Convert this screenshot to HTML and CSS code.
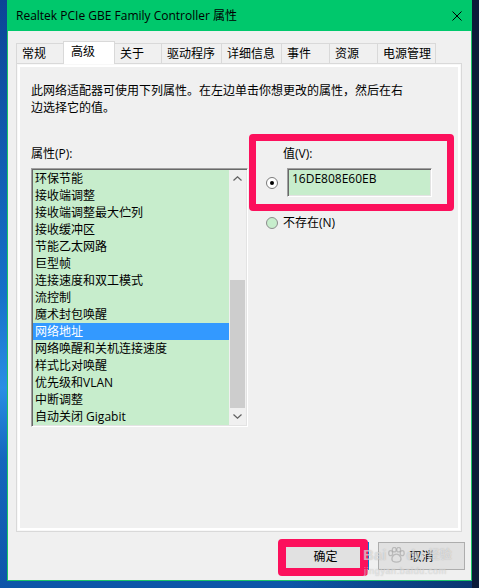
FILE: index.html
```html
<!DOCTYPE html>
<html lang="zh-CN">
<head>
<meta charset="utf-8">
<title>Realtek PCIe GBE Family Controller 属性</title>
<link rel="stylesheet" href="styles.css">
</head>
<body>
<div class="desktop">
  <div class="window">
    <div class="titlebar">
      <span class="title">Realtek PCIe GBE Family Controller 属性</span>
      <svg class="close" width="10" height="10" viewBox="0 0 10 10"><path d="M0.5 0.5 L9.5 9.5 M9.5 0.5 L0.5 9.5" stroke="#000" stroke-width="1" fill="none"/></svg>
    </div>
    <div class="body">
      <div class="tabs">
        <div class="tab w48">常规</div>
        <div class="tab active w52">高级</div>
        <div class="tab w48">关于</div>
        <div class="tab w61">驱动程序</div>
        <div class="tab w61">详细信息</div>
        <div class="tab w49">事件</div>
        <div class="tab w49">资源</div>
        <div class="tab w59">电源管理</div>
      </div>
      <div class="panel">
        <p class="desc">此网络适配器可使用下列属性。在左边单击你想更改的属性，然后在右<br>边选择它的值。</p>
        <div class="props">
          <div class="left">
            <div class="label">属性(P):</div>
            <div class="listbox">
              <ul class="items">
                <li>环保节能</li>
                <li>接收端调整</li>
                <li>接收端调整最大伫列</li>
                <li>接收缓冲区</li>
                <li>节能乙太网路</li>
                <li>巨型帧</li>
                <li>连接速度和双工模式</li>
                <li>流控制</li>
                <li>魔术封包唤醒</li>
                <li class="sel">网络地址</li>
                <li>网络唤醒和关机连接速度</li>
                <li>样式比对唤醒</li>
                <li>优先级和VLAN</li>
                <li>中断调整</li>
                <li>自动关闭 Gigabit</li>
              </ul>
              <div class="scrollbar">
                <div class="sb-btn"><svg width="9" height="5" viewBox="0 0 9 5"><path d="M0.5 4.5 L4.5 0.8 L8.5 4.5" stroke="#606060" stroke-width="1.2" fill="none"/></svg></div>
                <div class="sb-space"></div>
                <div class="sb-thumb"></div>
                <div class="sb-btn"><svg width="9" height="5" viewBox="0 0 9 5"><path d="M0.5 0.5 L4.5 4.2 L8.5 0.5" stroke="#606060" stroke-width="1.2" fill="none"/></svg></div>
              </div>
            </div>
          </div>
          <div class="right">
            <div class="label vlabel">值(V):</div>
            <div class="row">
              <span class="radio checked"></span>
              <div class="input">16DE808E60EB</div>
            </div>
            <div class="row row2">
              <span class="radio"></span>
              <span class="rlabel">不存在(N)</span>
            </div>
          </div>
        </div>
      </div>
      <div class="buttons">
        <button class="btn default">确定</button>
        <button class="btn">取消</button>
      </div>
    </div>
    <div class="mark mark1"></div>
    <div class="mark mark2"></div>
    <div class="watermark">
      <div class="wm-top">Bai<svg class="paw" width="18" height="16" viewBox="0 0 20 18"><g fill="none" stroke="rgba(160,160,160,0.6)" stroke-width="1.4"><ellipse cx="4" cy="7" rx="2.2" ry="2.8"/><ellipse cx="8" cy="3" rx="2.2" ry="2.6"/><ellipse cx="13" cy="3" rx="2.2" ry="2.6"/><ellipse cx="17" cy="7" rx="2.2" ry="2.8"/><path d="M10.5 8 C6 8 4 14 6.5 16 C8.5 17.2 12.5 17.2 14.5 16 C17 14 15 8 10.5 8 Z"/></g></svg>du<span class="wm-cn">经验</span></div>
      <div class="wm-url">jingyan.baidu.com</div>
    </div>
  </div>
</div>
</body>
</html>
```
FILE: styles.css
```css
* { box-sizing: border-box; }
html, body { margin: 0; padding: 0; }
body {
  width: 479px;
  height: 588px;
  overflow: hidden;
  font-family: "Open Sans", "Noto Sans CJK SC", sans-serif;
  font-size: 12px;
  color: #000;
}
.desktop {
  width: 479px;
  height: 588px;
  padding-left: 7px;
  background:
    linear-gradient(90deg, rgba(12,27,56,0) 472px, #0c1b38 472px),
    linear-gradient(90deg, rgba(0,0,0,0) 60%, rgba(10,30,70,0.6) 100%),
    linear-gradient(180deg, #0b4596 0%, #1670c8 50%, #2a8ee4 66%, #1566bd 78%, #0d55a8 100%);
}
.window {
  position: relative;
  width: 465px;
  height: 581px;
  background: #f0f0f0;
  border: 1px solid #1bc468;
  border-top: 0;
  display: flex;
  flex-direction: column;
}
.titlebar {
  height: 31px;
  margin: 0 -1px;
  background: #00c86c;
  display: flex;
  align-items: center;
  justify-content: space-between;
  padding: 0 10px 0 9px;
  flex: none;
}
.title {
  font-size: 12px;
  line-height: 17px;
  color: #000;
  white-space: nowrap;
}
.close { display: block; }
.body {
  flex: 1;
  padding: 10px 9px 0 8px;
  display: flex;
  flex-direction: column;
}
.tabs {
  display: flex;
  align-items: flex-end;
  height: 22px;
  flex: none;
}
.tab {
  height: 20px;
  border: 1px solid #d9d9d9;
  border-bottom: 0;
  background: #f0f0f0;
  padding-left: 5px;
  line-height: 19px;
  margin-left: -1px;
  white-space: nowrap;
}
.tab:first-child { margin-left: 0; }
.tab.active {
  height: 23px;
  margin-bottom: -1px;
  background: #fff;
  padding-left: 7px;
  line-height: 20px;
  position: relative;
  z-index: 1;
}
.w48 { width: 48px; }
.w49 { width: 49px; }
.w52 { width: 52px; }
.w59 { width: 59px; }
.w61 { width: 61px; }
.panel {
  height: 469px;
  flex: none;
  border: 1px solid #d9d9d9;
  background: #f0f0f0;
  box-shadow: inset 0 0 0 1px #f8f8f8, inset 0 0 0 3px #fff;
  padding: 18px 14px 0 14px;
}
.desc {
  margin: 0;
  line-height: 17px;
}
.props {
  display: flex;
  margin-top: 29px;
}
.left { width: 217px; flex: none; }
.label {
  line-height: 17px;
  height: 17px;
  margin-bottom: 6px;
}
.listbox {
  height: 259px;
  display: flex;
  background: #c7edcc;
  border: 1px solid;
  border-color: #a0a0a0 #fff #fff #a0a0a0;
  box-shadow: inset 1px 1px 0 #696969, inset -1px -1px 0 #e3e3e3;
  padding: 1px;
}
.items {
  list-style: none;
  margin: 0;
  padding: 0;
  flex: 1;
}
.items li {
  height: 17px;
  line-height: 17px;
  padding-left: 2px;
  white-space: nowrap;
}
.items li.sel {
  background: #3399ff;
  color: #fff;
}
.scrollbar {
  width: 17px;
  flex: none;
  background: #f0f0f0;
  display: flex;
  flex-direction: column;
}
.sb-btn {
  height: 17px;
  flex: none;
  display: flex;
  align-items: center;
  justify-content: center;
}
.sb-btn svg { display: block; }
.sb-space { flex: 1; }
.sb-thumb {
  height: 128px;
  flex: none;
  margin: 0 1px;
  background: #cdcdcd;
}
.right {
  margin-left: 18px;
  flex: 1;
}
.vlabel { padding-left: 17px; }
.row {
  display: flex;
  align-items: center;
}
.row2 {
  margin-top: 17px;
  height: 17px;
}
.radio {
  width: 12px;
  height: 12px;
  flex: none;
  border-radius: 50%;
  border: 1px solid #8c8c8c;
  background: #c7edcc;
  display: flex;
  align-items: center;
  justify-content: center;
}
.radio.checked { background: #fff; border-color: #7a7a7a; }
.radio.checked::after {
  content: "";
  width: 4px;
  height: 4px;
  border-radius: 50%;
  background: #000;
}
.input {
  margin-left: 9px;
  width: 145px;
  height: 29px;
  background: #c7edcc;
  border: 1px solid;
  border-color: #a0a0a0 #fff #fff #a0a0a0;
  box-shadow: inset 1px 1px 0 #696969, inset -1px -1px 0 #e3e3e3;
  padding: 1px 4px;
  line-height: 17px;
}
.rlabel {
  margin-left: 5px;
  line-height: 17px;
}
.buttons {
  display: flex;
  justify-content: flex-end;
  gap: 9px;
  margin: 10px -3px 0 0;
  flex: none;
}
.btn {
  width: 87px;
  height: 28px;
  margin: 0;
  padding: 0;
  font-family: "Open Sans", "Noto Sans CJK SC", sans-serif;
  font-size: 12px;
  color: #000;
  background: #e1e1e1;
  border: 1px solid #adadad;
  border-radius: 0;
}
.btn.default { border-color: #0078d7; }
.mark {
  position: absolute;
  border: 7px solid #fc105c;
  border-radius: 4px;
  z-index: 5;
}
.mark1 { left: 241px; top: 134px; width: 205px; height: 77px; }
.mark2 { left: 270px; top: 539px; width: 90px; height: 37px; border-width: 8px; }
.watermark {
  position: absolute;
  left: 355px;
  top: 547px;
  z-index: 6;
  color: rgba(255,255,255,0.5);
  text-shadow: 0 0 1px rgba(130,130,130,0.55);
}
.wm-top {
  display: flex;
  align-items: center;
  font-family: "Liberation Sans", "Noto Sans CJK SC", sans-serif;
  font-size: 15px;
  font-weight: bold;
  line-height: 16px;
}
.paw { display: block; margin: 0 1px; }
.wm-cn { margin-left: 3px; font-size: 12px; }
.wm-url {
  font-family: "Liberation Sans", sans-serif;
  font-size: 9px;
  line-height: 10px;
  margin-top: 3px;
  padding-left: 1px;
  letter-spacing: 0.6px;
}
```
